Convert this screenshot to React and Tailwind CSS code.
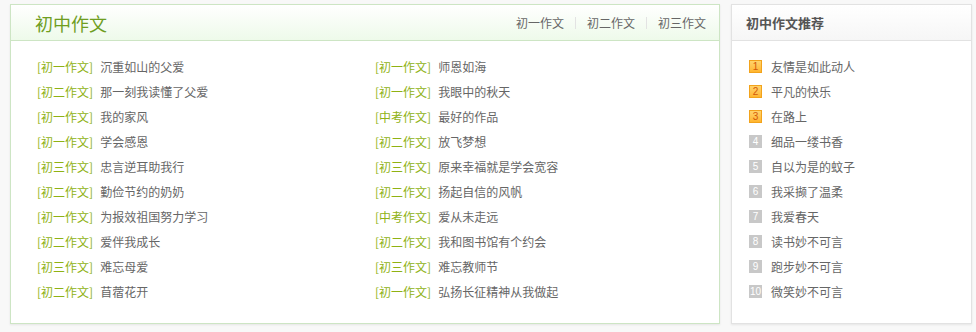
const left = [
  ['初一作文', '沉重如山的父爱'],
  ['初一作文', '师恩如海'],
  ['初二作文', '那一刻我读懂了父爱'],
  ['初一作文', '我眼中的秋天'],
  ['初一作文', '我的家风'],
  ['中考作文', '最好的作品'],
  ['初一作文', '学会感恩'],
  ['初二作文', '放飞梦想'],
  ['初三作文', '忠言逆耳助我行'],
  ['初三作文', '原来幸福就是学会宽容'],
  ['初二作文', '勤俭节约的奶奶'],
  ['初二作文', '扬起自信的风帆'],
  ['初一作文', '为报效祖国努力学习'],
  ['中考作文', '爱从未走远'],
  ['初二作文', '爱伴我成长'],
  ['初二作文', '我和图书馆有个约会'],
  ['初三作文', '难忘母爱'],
  ['初三作文', '难忘教师节'],
  ['初二作文', '苜蓿花开'],
  ['初一作文', '弘扬长征精神从我做起'],
];

const hot = [
  '友情是如此动人',
  '平凡的快乐',
  '在路上',
  '细品一缕书香',
  '自以为是的蚊子',
  '我采撷了温柔',
  '我爱春天',
  '读书妙不可言',
  '跑步妙不可言',
  '微笑妙不可言',
];

const font = { fontFamily: '"Noto Sans CJK SC", "Liberation Sans", sans-serif' };

export default function App() {
  return (
    <div className="w-[976px] h-[332px] bg-[#f8f8f8] pt-[4px] pl-[10px] flex gap-[11px]" style={font}>
      <div className="w-[710px] h-[320px] bg-white border border-[#cde5c4] shadow-[0_1px_2px_rgba(0,0,0,0.08)] flex flex-col">
        <div className="h-[36px] border-b border-[#cde5c4] bg-gradient-to-b from-white to-[#eefaea] flex items-center justify-between pl-[24px] pr-[13px]">
          <span className="text-[18px] leading-none text-[#6f9e1f]">初中作文</span>
          <div className="flex items-center text-[12px] text-[#666]">
            <span>初一作文</span>
            <span className="w-px h-[12px] bg-[#e3e3e3] mx-[11px]" />
            <span>初二作文</span>
            <span className="w-px h-[12px] bg-[#e3e3e3] mx-[11px]" />
            <span>初三作文</span>
          </div>
        </div>
        <div className="grid grid-cols-[338px_338px] pl-[26px] pt-[13px]">
          {left.map(([tag, title], i) => (
            <div key={i} className="h-[25px] flex items-center text-[12px]">
              <span className="text-[#8fb214]">[{tag}]</span>
              <span className="ml-[7px] text-[#666]">{title}</span>
            </div>
          ))}
        </div>
      </div>
      <div className="w-[241px] h-[320px] bg-white border border-[#e2e2e2] shadow-[0_1px_2px_rgba(0,0,0,0.08)] flex flex-col">
        <div className="h-[36px] border-b border-[#e2e2e2] bg-gradient-to-b from-white to-[#f6f6f6] flex items-center pl-[14px]">
          <span className="text-[13px] font-bold text-[#555]">初中作文推荐</span>
        </div>
        <div className="pl-[17px] pt-[13px]">
          {hot.map((t, i) => (
            <div key={i} className="h-[25px] flex items-center text-[12px]">
              {i < 3 ? (
                <span className="w-[13px] h-[13px] flex items-center justify-center text-[10px] leading-none border border-[#f2a31c] bg-gradient-to-b from-[#ffd36a] to-[#ffb52e] text-[#d2590a]" style={{ fontFamily: '"Liberation Sans", sans-serif' }}>
                  {i + 1}
                </span>
              ) : (
                <span className="w-[13px] h-[13px] flex items-center justify-center text-[10px] leading-none bg-[#c8c8c8] text-white" style={{ fontFamily: '"Liberation Sans", sans-serif' }}>
                  {i + 1}
                </span>
              )}
              <span className="ml-[9px] text-[#666]">{t}</span>
            </div>
          ))}
        </div>
      </div>
    </div>
  );
}
